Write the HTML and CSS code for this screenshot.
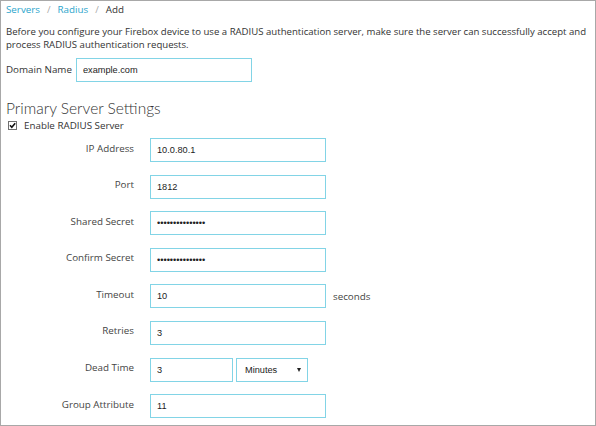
FILE: index.html
```html
<!DOCTYPE html>
<html>
<head>
<meta charset="utf-8">
<link rel="stylesheet" href="styles.css">
</head>
<body>
<div class="frame">
  <nav class="crumbs">
    <a href="#" class="crumb-link">Servers</a><span class="sep">/</span><a href="#" class="crumb-link">Radius</a><span class="sep">/</span><span class="crumb-current">Add</span>
  </nav>
  <p class="intro">Before you configure your Firebox device to use a RADIUS authentication server, make sure the server can successfully accept and process RADIUS authentication requests.</p>
  <div class="domain">
    <label class="domain-label">Domain Name</label>
    <input class="field" type="text" value="example.com">
  </div>
  <h2 class="section-title">Primary Server Settings</h2>
  <label class="check">
    <span class="checkbox"><svg width="9" height="9" viewBox="0 0 9 9"><rect x="0.5" y="0.5" width="8" height="8" fill="#fff" stroke="#707070"/><path d="M2 4.3 L3.8 6.3 L7.2 2.2" fill="none" stroke="#111" stroke-width="1.6"/></svg></span>
    <span>Enable RADIUS Server</span>
  </label>
  <div class="form">
    <label class="row-label">IP Address</label>
    <div class="row-ctl"><input class="field" type="text" value="10.0.80.1"></div>
    <label class="row-label">Port</label>
    <div class="row-ctl"><input class="field" type="text" value="1812"></div>
    <label class="row-label">Shared Secret</label>
    <div class="row-ctl"><input class="field" type="password" value="secretsecretsec"></div>
    <label class="row-label">Confirm Secret</label>
    <div class="row-ctl"><input class="field" type="password" value="secretsecretsec"></div>
    <label class="row-label">Timeout</label>
    <div class="row-ctl"><input class="field" type="text" value="10"><span class="unit">seconds</span></div>
    <label class="row-label">Retries</label>
    <div class="row-ctl"><input class="field" type="text" value="3"></div>
    <label class="row-label">Dead Time</label>
    <div class="row-ctl"><input class="field short" type="text" value="3"><span class="select-wrap"><select class="select"><option>Minutes</option></select></span></div>
    <label class="row-label">Group Attribute</label>
    <div class="row-ctl"><input class="field" type="text" value="11"></div>
  </div>
</div>
</body>
</html>
```
FILE: styles.css
```css
html, body {
  margin: 0;
  padding: 0;
  background: #fff;
}
.frame {
  box-sizing: border-box;
  width: 596px;
  height: 426px;
  border: 1px solid #a8a8a8;
  padding: 2px 5px 0 5px;
  font-family: "Open Sans", "DejaVu Sans", sans-serif;
  font-size: 9.8px;
  color: #333;
  overflow: hidden;
}
.crumbs {
  line-height: 14px;
  height: 14px;
}
.crumb-link {
  color: #2aa5cc;
  text-decoration: none;
}
.sep {
  color: #aaa;
  padding: 0 7px;
}
.crumb-current {
  color: #333;
}
.intro {
  margin: 9px 0 0 0;
  line-height: 12.5px;
  font-size: 9.6px;
  color: #333;
}
.domain {
  display: flex;
  align-items: center;
  margin-top: 7px;
  gap: 0;
}
.domain-label {
  color: #333;
  width: 70px;
  white-space: nowrap;
  position: relative;
  top: -1px;
}
.field {
  box-sizing: border-box;
  width: 176px;
  height: 24px;
  border: 1px solid #82d4e6;
  padding: 0 6px;
  font-family: "Liberation Sans", Arial, sans-serif;
  font-size: 9.2px;
  color: #222;
  background: #fff;
  margin: 0;
  outline: none;
}
.field.short {
  width: 83px;
}
.section-title {
  margin: 17px 0 0 0;
  font-family: Lato, "Open Sans", sans-serif;
  font-weight: 300;
  font-size: 15.5px;
  line-height: 18px;
  color: #333;
}
.check {
  display: flex;
  align-items: center;
  gap: 7px;
  margin-top: 2px;
  height: 13px;
}
.checkbox {
  display: block;
  width: 9px;
  height: 9px;
  margin-left: 2px;
  line-height: 0;
}
.form {
  display: grid;
  grid-template-columns: 128px auto;
  grid-auto-rows: 24px;
  column-gap: 16px;
  row-gap: 12.6px;
  margin-top: 6px;
  align-items: center;
}
.row-label {
  text-align: right;
  color: #444;
  position: relative;
  top: -2px;
}
.row-ctl {
  display: flex;
  align-items: center;
}
.unit {
  margin-left: 7px;
  color: #444;
}
.select-wrap {
  position: relative;
  margin-left: 3px;
  display: inline-block;
  height: 24px;
}
.select {
  box-sizing: border-box;
  width: 72px;
  height: 24px;
  border: 1px solid #82d4e6;
  background: #fff;
  appearance: none;
  -webkit-appearance: none;
  font-family: "Liberation Sans", Arial, sans-serif;
  font-size: 9.2px;
  color: #222;
  padding: 0 8px;
  margin: 0;
  border-radius: 0;
  outline: none;
}
.select-wrap::after {
  content: "";
  position: absolute;
  right: 7px;
  top: 10px;
  border-left: 2.5px solid transparent;
  border-right: 2.5px solid transparent;
  border-top: 4px solid #222;
  pointer-events: none;
}
```
